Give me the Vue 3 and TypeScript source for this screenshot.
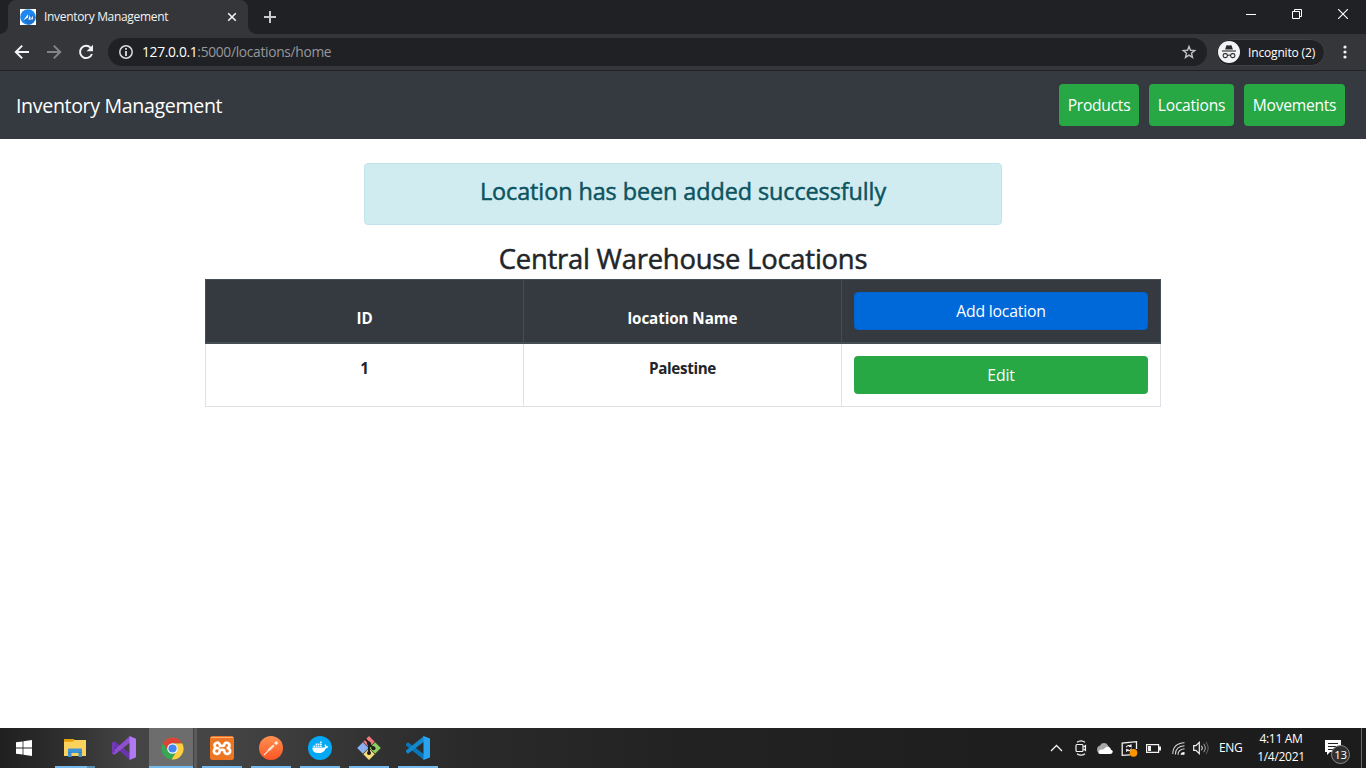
<script setup lang="ts">
interface NavItem { label: string; width: string }
interface LocationRow { id: number; name: string }

const navItems: NavItem[] = [
  { label: 'Products', width: 'w-products' },
  { label: 'Locations', width: 'w-locations' },
  { label: 'Movements', width: 'w-movements' },
]
const rows: LocationRow[] = [{ id: 1, name: 'Palestine' }]
</script>

<template>
  <div class="screen">
    <div class="tabstrip">
      <div class="tab">
        <svg class="favicon" width="16" height="16" viewBox="0 0 16 16">
          <rect width="16" height="16" fill="#fff" />
          <circle cx="8" cy="8" r="7.8" fill="#1e88f0" />
          <path d="M8 16a8 8 0 0 0 7.8-7.5L12 5 4 11.5z" fill="#1766b8" opacity=".6" />
          <path d="M3.4 11.2 8 5.2v3.4zM8.3 10.8l1.6-4.8.9 4.4zM11 10.6l1.5-4 .6 3.6z" fill="#fff" />
        </svg>
        <span class="tab-title">Inventory Management</span>
        <svg class="tab-close" width="10" height="10" viewBox="0 0 10 10"><path d="m1.2 1.2 7.6 7.6m0-7.6L1.2 8.8" stroke="#f1f3f4" stroke-width="1.6" /></svg>
      </div>
      <svg class="tab-plus" width="12" height="12" viewBox="0 0 12 12"><path d="M6 0v12M0 6h12" stroke="#c9cacc" stroke-width="2" /></svg>
      <div class="window-controls">
        <svg width="10" height="10" viewBox="0 0 10 10"><path d="M0 5.5h10" stroke="#fff" /></svg>
        <svg width="10" height="10" viewBox="0 0 10 10" fill="none" stroke="#fff"><path d="M.5 2.5h7v7h-7zM2.5 2.5v-2h7v7h-2" /></svg>
        <svg width="10" height="10" viewBox="0 0 10 10"><path d="m0 0 10 10M10 0 0 10" stroke="#fff" stroke-width="1.1" /></svg>
      </div>
    </div>

    <div class="toolbar">
      <svg class="tool back" width="16" height="16" viewBox="0 0 16 16" fill="none" stroke="#f1f3f4" stroke-width="2"><path d="M15 8H2.4M8.2 1.6 1.8 8l6.4 6.4" /></svg>
      <svg class="tool forward" width="16" height="16" viewBox="0 0 16 16" fill="none" stroke="#838487" stroke-width="2"><path d="M1 8h12.6M7.8 1.6 14.2 8l-6.4 6.4" /></svg>
      <svg class="tool reload" width="16" height="16" viewBox="0 0 16 16"><path d="M12.7 3.9A6.1 6.1 0 1 0 13.9 10" fill="none" stroke="#f1f3f4" stroke-width="2" /><path d="M15 .8v6.4H8.6z" fill="#f1f3f4" /></svg>
      <div class="omnibox">
        <svg width="14" height="14" viewBox="0 0 14 14"><circle cx="7" cy="7" r="6.2" fill="none" stroke="#dcdde0" stroke-width="1.5" /><path d="M7 3v1.7M7 6v5" stroke="#e8eaed" stroke-width="1.7" /></svg>
        <span class="url"><b>127.0.0.1</b>:5000/locations/home</span>
        <svg class="star" width="16" height="16" viewBox="0 0 16 16"><path d="m8 2.4 1.5 3.9 4.2.3-3.2 2.7 1 4.1L8 11.1l-3.5 2.3 1-4.1-3.2-2.7 4.2-.3z" fill="none" stroke="#c1c2c5" stroke-width="1.4" /></svg>
      </div>
      <div class="incognito">
        <svg width="22" height="22" viewBox="0 0 22 22">
          <circle cx="11" cy="11" r="11" fill="#f1f3f4" />
          <path d="M7.1 8.4 8.4 4.6q.2-.6.9-.4l1.7.4 1.7-.4q.7-.2.9.4l1.3 3.8z" fill="#292a2d" />
          <path d="M4 10h14" stroke="#292a2d" stroke-width="1.1" />
          <g fill="none" stroke="#292a2d" stroke-width="1.1"><rect x="5.1" y="12.6" width="4.3" height="4" rx="1.9" /><rect x="12.6" y="12.6" width="4.3" height="4" rx="1.9" /><path d="M9.4 14.4q1.6-.7 3.2 0" /></g>
        </svg>
        <span>Incognito (2)</span>
      </div>
      <svg class="kebab" width="4" height="14" viewBox="0 0 4 14" fill="#f1f3f4"><circle cx="2" cy="2" r="1.6" /><circle cx="2" cy="7" r="1.6" /><circle cx="2" cy="12" r="1.6" /></svg>
    </div>

    <nav class="navbar">
      <span class="brand">Inventory Management</span>
      <div class="nav-links">
        <a v-for="item in navItems" :key="item.label" class="nav-btn" :class="item.width">{{ item.label }}</a>
      </div>
    </nav>

    <main class="page">
      <div class="alert"><h4>Location has been added successfully</h4></div>
      <h3 class="heading">Central Warehouse Locations</h3>
      <div class="table">
        <div class="row head">
          <div class="cell label">ID</div>
          <div class="cell label name">location Name</div>
          <div class="cell"><a class="btn blue">Add location</a></div>
        </div>
        <div v-for="row in rows" :key="row.id" class="row">
          <div class="cell label">{{ row.id }}</div>
          <div class="cell label place">{{ row.name }}</div>
          <div class="cell"><a class="btn green">Edit</a></div>
        </div>
      </div>
    </main>

    <footer class="taskbar">
      <div class="slot start">
        <svg width="16" height="16" viewBox="0 0 16 16" fill="#fff"><path d="M0 2.3 6.6 1.4v6.2H0zM7.4 1.3 16 0v7.6H7.4zM0 8.4h6.6v6.2L0 13.7zM7.4 8.4H16V16l-8.6-1.3z" /></svg>
      </div>
      <div class="slot files open">
        <svg width="22" height="20" viewBox="0 0 22 20">
          <path d="M0 1h9l1.5 1H22v16H0z" fill="#fbd25c" /><path d="M0 1h9l1 1.2-1 1.5H0z" fill="#e3a008" />
          <path d="M4 19v-7.4q0-1 1-1h12q1 0 1 1V19h-3.5v-4h-7v4z" fill="#3e94d6" /><path d="M4 14h3.5v1H4zM14.5 14H18v1h-3.5z" fill="#2f82c4" />
        </svg>
      </div>
      <div class="slot vs">
        <svg width="24" height="24" viewBox="0 0 24 24"><path d="m0 6.5 2.5-1.3L20 19l-2 5L0 8z" fill="#6b35b0" /><path d="m0 17.5 2.5 1.3L20 5l-2-5L0 16z" fill="#8e50cf" /><path d="M0 6.5 3 8v8l-3 1.5z" fill="#7139b4" /><path d="m17.5 0 6.5 2.8v18.4L17.5 24z" fill="#b179f1" /></svg>
      </div>
      <div class="slot chrome open active">
        <svg width="23" height="23" viewBox="0 0 24 24"><circle cx="12" cy="12" r="11.5" fill="#34a853" /><path d="M12 .5a11.5 11.5 0 0 1 10.2 6.2H12a5.3 5.3 0 0 0-4.6 7.9L2 6.3A11.5 11.5 0 0 1 12 .5z" fill="#db4437" /><path d="M22.2 6.7A11.5 11.5 0 0 1 11 23.5l5.6-8.8A5.3 5.3 0 0 0 12 6.7z" fill="#ffcd40" /><circle cx="12" cy="12" r="5.5" fill="#fff" /><circle cx="12" cy="12" r="4.3" fill="#4285f4" /></svg>
      </div>
      <div class="slot open">
        <svg width="24" height="24" viewBox="0 0 24 24"><rect width="24" height="24" rx="2.5" fill="#ee7623" /><path d="M1 1.5h22" stroke="#f8b27c" /><path d="M9.6 12.2H7.4a2.9 2.9 0 1 0 2.3 2.9q0-1.3 1.1-1.3h2.4q1.1 0 1.1 1.3a2.9 2.9 0 1 0 2.3-2.9M7.4 12.2a2.7 2.7 0 1 1 2.2-4.1q.2 1.7 1.4 1.7h2q1.2 0 1.4-1.7a2.7 2.7 0 1 1 2.2 4.1" fill="none" stroke="#fff" stroke-width="2.7" stroke-linejoin="round" /></svg>
      </div>
      <div class="slot open">
        <svg width="24" height="24" viewBox="0 0 24 24"><defs><linearGradient id="pm" x2="0" y2="1"><stop stop-color="#ff9150" /><stop offset="1" stop-color="#ff5425" /></linearGradient></defs><circle cx="12" cy="12" r="12" fill="url(#pm)" /><path d="m8 15.4 1.4-2.6 4.8-4.2 1.4 1.4-4.4 4.4z" fill="#ffe3d6" /><circle cx="17.2" cy="7" r="1.8" fill="#ffe9df" /><path d="m5 19 5.5-5.5" stroke="#ffe3d6" stroke-width="1.1" /></svg>
      </div>
      <div class="slot open">
        <svg width="24" height="24" viewBox="0 0 24 24"><circle cx="12" cy="12" r="12" fill="#03a9f4" /><path d="M4.3 11.5h12.3q.8-1-.1-2.4l.8-.8q1.1.8 1.2 2 1.1-.2 2 .3-.6 1.7-2.7 1.8-2 4.7-7.6 4.7-5.7 0-5.9-5.6z" fill="#fff" /><path d="M5.4 9.4h1.7v1.7H5.4zM7.6 9.4h1.7v1.7H7.6zM9.8 9.4h1.7v1.7H9.8zM12 9.4h1.7v1.7H12zM7.6 7.4h1.7V9H7.6zM9.8 7.4h1.7V9H9.8zM12 7.4h1.7V9H12zM12 5.4h1.7V7H12z" fill="#fff" opacity=".9" /></svg>
      </div>
      <div class="slot open">
        <svg width="24" height="24" viewBox="0 0 24 24"><path d="m12 0 5.7 5.7-5.7 5.7-5.7-5.7z" fill="#f27979" /><path d="m5.9 6.3 5.7 5.7-5.7 5.7L.2 12z" fill="#8ab0f2" /><path d="m18.1 6.3 5.7 5.7-5.7 5.7-5.7-5.7z" fill="#8fcf5c" /><path d="m12 12.6 5.7 5.7L12 24l-5.7-5.7z" fill="#f5dd7a" /><path d="M8.3 3.2 12 7v10M12 8l4.2 4" fill="none" stroke="#1d1d1d" stroke-width="1.9" /><g fill="#1d1d1d"><circle cx="12" cy="7.4" r="2" /><circle cx="12" cy="17" r="2" /><circle cx="16.5" cy="12.2" r="2" /></g></svg>
      </div>
      <div class="slot open">
        <svg width="24" height="24" viewBox="0 0 24 24"><path d="m0 8 2-1.8L19 19l-1 5L0 9.5z" fill="#0877b9" /><path d="m0 16 2 1.8L19 5l-1-5L0 14.5z" fill="#1289cf" /><path d="m17.5 0 6.5 2.6v18.8L17.5 24z" fill="#27a5f3" /></svg>
      </div>

      <div class="tray">
        <svg width="13" height="8" viewBox="0 0 13 8"><path d="m1 7 5.5-5.5L12 7" fill="none" stroke="#f2f2f2" stroke-width="1.3" /></svg>
        <svg class="t-cam" width="12" height="16" viewBox="0 0 12 16" fill="none" stroke="#f2f2f2" stroke-width="1.2"><rect x="1" y="4.5" width="7" height="7" rx="1" /><path d="m8.5 7 2-1.3v4.6l-2-1.3M2 2.2Q6-.6 10 2.2M2 13.8q4 2.8 8 0" /></svg>
        <svg class="t-cloud" width="17" height="12" viewBox="0 0 17 12"><path d="M1 7a4 4 0 0 1 3-3.6 4.5 4.5 0 0 1 8 0L15 8l-5 3H4Q1 11 1 7z" fill="#a8a8a8" /><path d="M2.5 10q.3-2.5 3.3-2.5l2-.2Q9.3 4.5 12 4.8t3 3q1.8.5 1.8 2Q16.6 12 14 12H4q-2 0-1.5-2z" fill="#fff" /></svg>
        <svg class="t-upd" width="17" height="17" viewBox="0 0 17 17"><path d="m9 14.8-7.8.6V3L15.5 1.6V9" fill="none" stroke="#f2f2f2" stroke-width="1.3" /><path d="M5.2 7.2A3 3 0 0 1 10 6.4V4.3M10 6.4H7.8M10.6 8.6a3 3 0 0 1-5 1.2v2M5.6 9.8h2" fill="none" stroke="#f2f2f2" stroke-width="1.1" /><circle cx="12.5" cy="12.9" r="3.8" fill="#ff9500" /></svg>
        <svg class="t-bat" width="15" height="9" viewBox="0 0 15 9"><path d="M.6.6h12v7.8H.6z" fill="none" stroke="#f2f2f2" stroke-width="1.2" /><path d="M2 2h3v5H2zM13 2.5h2v4h-2z" fill="#f2f2f2" /></svg>
        <svg class="t-wifi" width="13" height="13" viewBox="0 0 13 13" fill="none" stroke="#d6d6d6" stroke-width="1.1"><path d="M.8 12Q.8 1.5 12.5.8M3.4 12.5q0-8 9.1-8.7M6 12.7q0-5.2 6.5-5.9" /><path d="M8.6 12.7q0-2.5 3.9-2.8v2.8z" fill="#fff" stroke="none" /></svg>
        <svg class="t-vol" width="16" height="14" viewBox="0 0 16 14" fill="none" stroke="#f2f2f2"><path d="M.7 4.7h2.2l3.4-3.3v11.2L2.9 9.3H.7z" stroke-width="1.2" /><path d="M8.5 4.7q1.7 2.3 0 4.6" /><path d="M10.7 2.8q3.2 4.2 0 8.4" stroke="#aaa" /><path d="M13 1q4.4 6 0 12" stroke="#666" /></svg>
        <span class="lang">ENG</span>
        <div class="clock"><span class="time">4:11 AM</span><span class="date">1/4/2021</span></div>
        <div class="notice">
          <svg width="16" height="15" viewBox="0 0 16 15"><path d="M0 0h16v12H5l-3 3v-3H0z" fill="#fff" /><path d="M3 3.5h10M3 6.5h10M3 9.5h7" stroke="#202020" /></svg>
          <span class="badge">13</span>
        </div>
      </div>
    </footer>
  </div>
</template>

<style>
body { margin: 0; background: #fff; }
</style>

<style scoped>
.screen { width: 1366px; height: 768px; display: flex; flex-direction: column; overflow: hidden; background: #fff; font-family: "Open Sans", "Noto Sans", sans-serif; color: #212529; }
.screen * { box-sizing: border-box; }
svg { display: block; flex: none; }
span, a, h3, h4 { white-space: nowrap; }

.tabstrip { height: 34px; flex: none; background: #202124; display: flex; align-items: center; }
.tab { width: 240px; height: 34px; margin-left: 8px; background: #35363a; border-radius: 8px 8px 0 0; display: flex; align-items: center; padding-left: 12px; position: relative; }
.tab::before, .tab::after { content: ""; position: absolute; bottom: 0; width: 8px; height: 8px; }
.tab::before { left: -8px; background: radial-gradient(circle at 0 0, transparent 7.5px, #35363a 8px); }
.tab::after { right: -8px; background: radial-gradient(circle at 100% 0, transparent 7.5px, #35363a 8px); }
.tab-title { width: 183px; margin-left: 8px; font-size: 12px; letter-spacing: -0.32px; line-height: 16px; color: #f1f3f4; }
.tab-plus { margin-left: 16px; }
.window-controls { display: flex; gap: 36px; margin-left: auto; margin-right: 18px; margin-bottom: 6px; }

.toolbar { height: 37px; flex: none; background: #35363a; border-bottom: 1px solid #202124; display: flex; align-items: center; padding-left: 14px; }
.tool + .tool { margin-left: 16px; }
.omnibox { width: 1099px; height: 28px; margin-left: 14px; border-radius: 14px; background: #202124; display: flex; align-items: center; padding: 0 10px 0 11px; }
.url { margin-left: 9px; font-size: 13.8px; letter-spacing: -0.32px; line-height: 18px; color: #96989c; }
.url b { font-weight: 400; color: #fff; }
.star { margin-left: auto; }
.incognito { width: 109px; height: 27px; margin-left: 9px; border: 1px solid #3f4044; border-radius: 14px; background: #202124; display: flex; align-items: center; padding-left: 1px; font-size: 12px; letter-spacing: -0.16px; color: #fff; }
.incognito span { margin-left: 8px; }
.kebab { margin-left: 18px; }

.navbar { height: 68px; flex: none; background: #343a40; display: flex; align-items: center; justify-content: space-between; padding: 0 21px 0 16px; }
.brand { font-size: 19.6px; letter-spacing: -0.35px; line-height: 30px; padding-top: 1px; color: #fff; }
.nav-links { display: flex; gap: 10px; }
.nav-btn { height: 42px; border-radius: 4px; background: #28a745; color: #fff; font-size: 15.6px; letter-spacing: -0.25px; line-height: 43px; text-align: center; }
.w-products { width: 80px; }
.w-locations { width: 85px; }
.w-movements { width: 101px; }

.page { flex: 1; display: flex; flex-direction: column; align-items: center; padding-top: 24px; }
.alert { width: 638px; height: 62px; border: 1px solid #bee5eb; border-radius: 4px; background: #d1ecf1; color: #0c5460; padding-top: 11px; text-align: center; }
h4 { margin: 0; font-size: 23.4px; font-weight: 400; letter-spacing: -0.08px; line-height: 32px; -webkit-text-stroke: 0.5px currentColor; }
.heading { margin: 17px 0 3px; font-size: 27.4px; font-weight: 400; letter-spacing: -0.22px; line-height: 34px; -webkit-text-stroke: 0.5px currentColor; }
.table { width: 956px; border: 1px solid #dee2e6; border-top: 0; }
.row { height: 62px; display: grid; grid-template-columns: 317px 318px 319px; }
.row .cell + .cell { border-left: 1px solid #dee2e6; }
.cell { padding: 12px; text-align: center; }
.label { font-size: 15.2px; letter-spacing: -0.08px; font-weight: 700; line-height: 24px; }
.place { letter-spacing: -0.35px; }
.head { width: 956px; height: 65px; margin-left: -1px; border: 1px solid #454d55; border-bottom-width: 2px; background: #343a40; color: #fff; }
.head .cell + .cell { border-left-color: #454d55; }
.head .label { padding-top: 26px; }
.btn { display: block; height: 38px; border-radius: 4px; color: #fff; font-size: 15.8px; letter-spacing: -0.2px; line-height: 39px; }
.blue { background: #0069d9; border: 1px solid #0062cc; line-height: 37px; }
.green { background: #28a745; }

.taskbar { height: 40px; flex: none; display: flex; background: linear-gradient(90deg, #202020 0, #2b2b2b 50px, #444 130px, #454545 220px, #333 360px, #292929 480px, #222 700px, #1e1e1e 1000px, #1c1c1c 1366px); }
.slot { width: 40px; height: 40px; margin-right: 9px; display: flex; align-items: center; justify-content: center; }
.open { box-shadow: inset 0 -2px #76b9ed; }
.start { width: 48px; margin-right: 7px; }
.files { position: relative; }
.files::after { content: ""; position: absolute; right: 0; bottom: 0; width: 8px; height: 2px; background: #5a8db4; }
.vs { margin-right: 5px; }
.chrome { width: 44px; padding-left: 3px; margin-right: 9px; }
.active { background: #6d6d6d; box-shadow: inset 0 -2px #76b9ed, 1px 0 #444, 4px 0 #5a5a5a; }
.tray { margin-left: auto; display: flex; align-items: center; color: #fff; font-size: 12px; letter-spacing: -0.3px; }
.tray > svg:first-child { margin-right: 1px; }
.t-cam { margin-left: 11px; }
.t-cloud { margin-left: 9px; }
.t-upd { margin-left: 8px; }
.t-bat { margin-left: 8px; }
.t-wifi { margin-left: 11px; }
.t-vol { margin-left: 8px; }
.lang { width: 24px; margin-left: 10px; padding-bottom: 2px; }
.clock { width: 62px; margin-left: 7px; display: flex; flex-direction: column; text-align: center; line-height: 18px; }
.notice { width: 54px; height: 40px; padding: 12px 0 0 13px; position: relative; }
.notice::after { content: ""; position: absolute; right: 4px; top: 0; width: 1px; height: 40px; background: #6a6a6a; }
.badge { position: absolute; left: 19px; top: 17px; width: 19px; height: 19px; border: 1px solid #8a8a8a; border-radius: 50%; background: #303030; font-size: 11.5px; line-height: 17px; text-align: center; }
</style>
